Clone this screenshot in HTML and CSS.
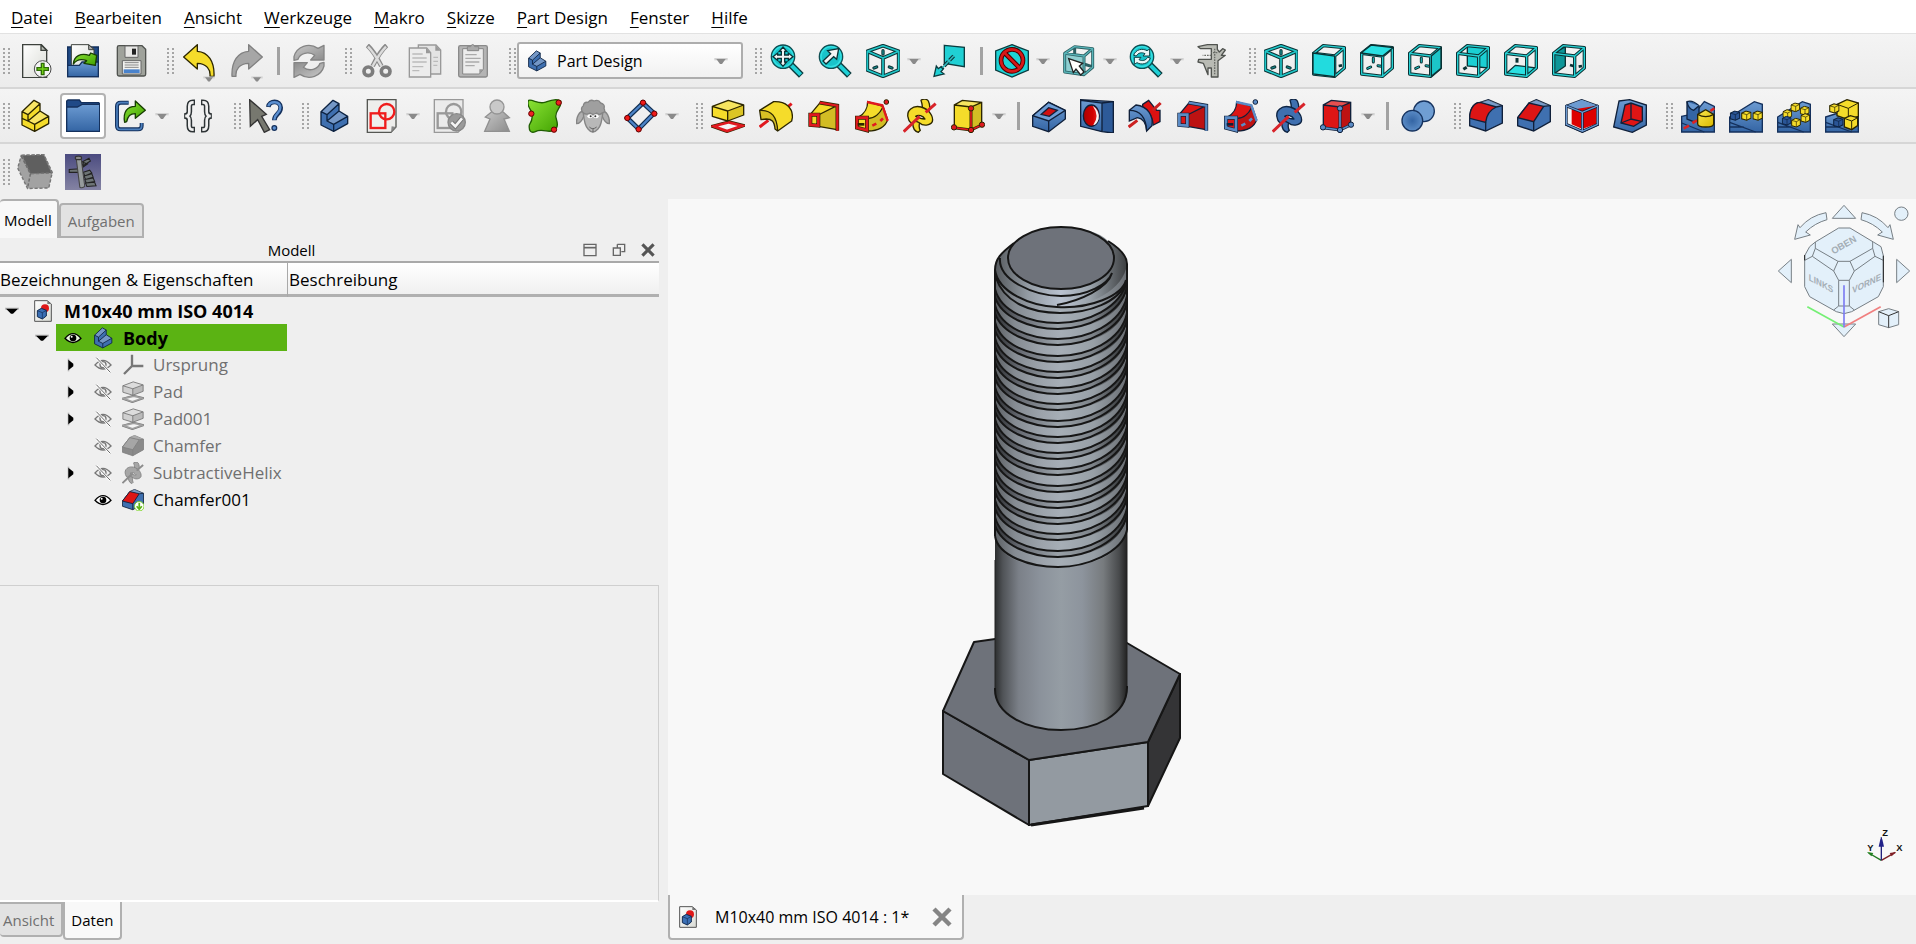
FILE: index.html
```html
<!DOCTYPE html>
<html lang="de">
<head>
<meta charset="utf-8">
<title>M10x40 mm ISO 4014 - FreeCAD</title>
<link rel="stylesheet" href="styles.css">
</head>
<body>
<svg class="sprite" aria-hidden="true">
  <defs>
    <linearGradient id="g-blue" x1="0" y1="0" x2="0" y2="1"><stop offset="0" stop-color="#6c9bd2"/><stop offset="1" stop-color="#3465a4"/></linearGradient>
    <linearGradient id="g-yellow" x1="0" y1="0" x2="1" y2="1"><stop offset="0" stop-color="#fce94f"/><stop offset="1" stop-color="#d9b800"/></linearGradient>
    <linearGradient id="g-green" x1="0" y1="0" x2="1" y2="1"><stop offset="0" stop-color="#8ae234"/><stop offset="1" stop-color="#3fa000"/></linearGradient>
    <linearGradient id="g-gray" x1="0" y1="0" x2="1" y2="1"><stop offset="0" stop-color="#c8c8c8"/><stop offset="1" stop-color="#8c8c8c"/></linearGradient>
    <linearGradient id="g-paper" x1="0" y1="0" x2="1" y2="1"><stop offset="0" stop-color="#ffffff"/><stop offset="1" stop-color="#d9dbd5"/></linearGradient>
    <linearGradient id="g-night" x1="0" y1="0" x2="0" y2="1"><stop offset="0" stop-color="#4b4b80"/><stop offset="1" stop-color="#8483a3"/></linearGradient>
    <radialGradient id="g-ball"><stop offset="0" stop-color="#3465a4"/><stop offset="1" stop-color="#5b8cc6"/></radialGradient>
    <linearGradient id="g-bore"><stop offset="0" stop-color="#a00"/><stop offset=".6" stop-color="#d40000"/><stop offset="1" stop-color="#ef3030"/></linearGradient>
    <linearGradient id="g-shank"><stop offset="0" stop-color="#2c2e2f"/><stop offset=".06" stop-color="#505357"/><stop offset=".18" stop-color="#7b8088"/><stop offset=".34" stop-color="#8b929b"/><stop offset=".5" stop-color="#959da4"/><stop offset=".66" stop-color="#8d949d"/><stop offset=".82" stop-color="#777b7e"/><stop offset=".94" stop-color="#484a4c"/><stop offset="1" stop-color="#222"/></linearGradient>
    <linearGradient id="g-thread"><stop offset="0" stop-color="#5c6064"/><stop offset=".15" stop-color="#858b92"/><stop offset=".35" stop-color="#9ca3ab"/><stop offset=".5" stop-color="#a6aeb6"/><stop offset=".75" stop-color="#979fa6"/><stop offset="1" stop-color="#6a6e73"/></linearGradient>
    <linearGradient id="g-root"><stop offset="0" stop-color="#2e3033"/><stop offset=".2" stop-color="#6a6e76"/><stop offset=".48" stop-color="#99a1a8"/><stop offset=".75" stop-color="#7d8389"/><stop offset="1" stop-color="#2e3032"/></linearGradient>
    <linearGradient id="g-bevel"><stop offset="0" stop-color="#55595d"/><stop offset=".25" stop-color="#939ba3"/><stop offset=".5" stop-color="#b9c2d0"/><stop offset=".72" stop-color="#9aa3ab"/><stop offset="1" stop-color="#3c3e40"/></linearGradient>
  </defs>

  <symbol id="i-new" viewBox="0 0 102 102"><path d="M14 2H70L86 18V101H14Z" fill="url(#g-paper)" stroke="#3c413c" stroke-width="4"/><path d="M69 2V19H86Z" fill="#babdb6" stroke="#3c413c" stroke-width="4"/><circle cx="74" cy="75" r="25" fill="#f4f4f4" stroke="#4a4a4a" stroke-width="3"/><path d="M70 58h8v13h13v8H78v13h-8V79H57v-8h13Z" fill="#73d216" stroke="#2d6b06" stroke-width="4"/></symbol>
  <symbol id="i-open" viewBox="0 0 102 102"><path d="M5 9H97V98H5Z" fill="#204a87" stroke="#14305c" stroke-width="4"/><path d="M16 2H68L84 16V70H16Z" fill="url(#g-paper)" stroke="#3c413c" stroke-width="3"/><path d="M68 2V17H84Z" fill="#aaa" stroke="#3c413c" stroke-width="3"/><path d="M5 64H40L48 54H97V98H5Z" fill="url(#g-blue)" stroke="#14305c" stroke-width="4"/><path d="M22 60C24 36 44 26 70 34L74 27L92 34L88 64L54 58L62 50C46 44 32 46 22 60Z" fill="url(#g-green)" stroke="#173d02" stroke-width="4" stroke-linejoin="round"/></symbol>
  <symbol id="i-save" viewBox="0 0 102 102"><path d="M10 10Q10 5 15 5H84L95 16V91Q95 96 90 96H15Q10 96 10 91Z" fill="#9fa29b" stroke="#50534f" stroke-width="4"/><path d="M33 6H72V40H33Z" fill="#e8e8e6" stroke="#666" stroke-width="3"/><path d="M54 14H66V32H54Z" fill="#222"/><path d="M25 50H81V90H25Z" fill="#f2f2f0" stroke="#666" stroke-width="3"/><path d="M32 56H74M32 63H74M32 70H74" stroke="#888" stroke-width="3"/><path d="M29 76H77V87H29Z" fill="#4a83cc"/></symbol>
  <symbol id="i-undo" viewBox="0 0 102 102"><path d="M5 39L46 2V22C78 24 98 52 96 97H84C86 76 74 59 46 58V75Z" fill="var(--main)" stroke="var(--ink)" stroke-width="4" stroke-linejoin="round"/></symbol>
  <symbol id="i-refresh" viewBox="0 0 102 102"><path id="p-refresh" d="M6 38C14 8 50-6 78 13L96 4V48H56L68 34C50 20 24 28 18 46L6 49Z" fill="url(#g-gray)" stroke="#858585" stroke-width="4" stroke-linejoin="round"/><use href="#p-refresh" transform="rotate(180 51 52)"/></symbol>
  <symbol id="i-cut" viewBox="0 0 102 102"><path d="M22 4C34 14 52 42 64 66M80 4C68 14 50 42 38 66" stroke="#8a8a8a" stroke-width="14" fill="none"/><path d="M24 8C36 20 52 44 64 66M78 8C66 20 50 44 38 66" stroke="#dcdcdc" stroke-width="7" fill="none"/><circle cx="25" cy="82" r="13" fill="none" stroke="#7d7d7d" stroke-width="11"/><circle cx="77" cy="82" r="13" fill="none" stroke="#7d7d7d" stroke-width="11"/></symbol>
  <symbol id="i-copy" viewBox="0 0 102 102"><path d="M31 3H84L98 18V90H31Z" fill="#e4e4e4" stroke="#999" stroke-width="4"/><path d="M82 3V20H98Z" fill="#999"/><path d="M4 12H56L68 26V99H4Z" fill="#ececec" stroke="#999" stroke-width="4"/><path d="M54 12V28H68Z" fill="#999"/><path d="M13 30H44M13 42H56M13 54H56M13 68H46M13 80H34M76 40H90M76 52H90M76 64H88" stroke="#bbb" stroke-width="4"/></symbol>
  <symbol id="i-paste" viewBox="0 0 102 102"><rect x="8" y="5" width="86" height="94" rx="5" fill="#b4b4b4" stroke="#8a8a8a" stroke-width="4"/><path d="M20 14H82V76L70 90H20Z" fill="#ececec" stroke="#888" stroke-width="3"/><path d="M34 8H44Q50-6 56 8H68V20H34Z" fill="#aaa" stroke="#888" stroke-width="3"/><path d="M28 32H62M28 43H74M28 54H70M28 65H56" stroke="#aaa" stroke-width="4"/><path d="M70 90V76H82Z" fill="#999"/></symbol>
  <symbol id="i-lens" viewBox="0 0 102 102"><path d="M62 62L94 94" stroke="#0b3c3f" stroke-width="20"/><path d="M62 62L92 92" stroke="#1fd0d6" stroke-width="12"/><circle cx="39" cy="38" r="35" fill="#19c4ca" stroke="#0f4e52" stroke-width="4"/><circle cx="39" cy="38" r="30" fill="none" stroke="#34e0e2" stroke-width="4"/></symbol>
  <symbol id="i-fit" viewBox="0 0 102 102"><use href="#i-lens"/><path d="M39 9L50 22H44V33H55V27L69 38L55 49V43H44V54H50L39 67L28 54H34V43H23V49L9 38L23 27V33H34V22H28Z" fill="#f4f4f4" stroke="#0b3337" stroke-width="4"/></symbol>
  <symbol id="i-fitsel" viewBox="0 0 102 102"><use href="#i-lens"/><path d="M62 14L56 46L47 38L24 60L15 51L38 29L29 20Z" fill="#f4f4f4" stroke="#0b3337" stroke-width="4"/></symbol>
  <symbol id="i-zoomcycle" viewBox="0 0 102 102"><use href="#i-lens"/><path d="M14 34C20 16 40 12 54 20L62 15V36H42L48 29C38 24 28 26 22 36ZM64 42C58 60 38 64 24 56L16 61V40H36L30 47C40 52 50 50 56 40Z" fill="#e9f7f7" stroke="#0b4347" stroke-width="3"/></symbol>
  <symbol id="i-iso" viewBox="0 0 102 102"><g fill="none" stroke-linejoin="round"><path d="M4 22L51 5L98 22V78L51 97L4 78ZM4 22L51 42L98 22M51 42V97" stroke="#0d3537" stroke-width="11"/><path d="M4 22L51 5L98 22V78L51 97L4 78ZM4 22L51 42L98 22M51 42V97" stroke="#20c7c9" stroke-width="5"/></g><path d="M51 20V30M24 72L32 69M70 69L78 72" stroke="#0d3537" stroke-width="10" stroke-linecap="round"/><path d="M51 20V30M24 72L32 69M70 69L78 72" stroke="#178b8e" stroke-width="4" stroke-linecap="round"/></symbol>
  <symbol id="i-frame" viewBox="0 0 102 102"><path d="M5 28L68 36L97 11L34 5ZM5 28V90L68 97V36M68 97L97 72V11" fill="none" stroke="#0b3234" stroke-width="10" stroke-linejoin="round"/><path d="M5 28L68 36L97 11L34 5ZM5 28V90L68 97V36M68 97L97 72V11" fill="none" stroke="#26d2d4" stroke-width="4" stroke-linejoin="round"/></symbol>
  <symbol id="i-marks" viewBox="0 0 102 102"><path d="M40 42V54M23 73L32 69M54 65L64 67" stroke="#0b3234" stroke-width="9" stroke-linecap="round"/><path d="M40 42V54M23 73L32 69M54 65L64 67" stroke="#20c7c9" stroke-width="3" stroke-linecap="round"/></symbol>
  <symbol id="i-front" viewBox="0 0 102 102"><path d="M80 66L90 64" stroke="#0b3234" stroke-width="8"/><use href="#i-frame"/><path d="M3 27L68 36V98L3 90Z" fill="#22dbde" stroke="#0b3234" stroke-width="4"/></symbol>
  <symbol id="i-top" viewBox="0 0 102 102"><use href="#i-marks"/><use href="#i-frame"/><path d="M3 27L68 36L99 11L34 3Z" fill="#2be0e2" stroke="#0b3234" stroke-width="4"/></symbol>
  <symbol id="i-right" viewBox="0 0 102 102"><use href="#i-marks"/><use href="#i-frame"/><path d="M70 36L99 11V73L70 97Z" fill="#1cc5c8" stroke="#0b3234" stroke-width="4"/></symbol>
  <symbol id="i-rear" viewBox="0 0 102 102"><path d="M34 5L97 11V72L34 66Z" fill="#1bd0d3" stroke="#0b3234" stroke-width="4"/><path d="M22 76L32 70" stroke="#0b3234" stroke-width="9"/><use href="#i-frame"/></symbol>
  <symbol id="i-bottom" viewBox="0 0 102 102"><path d="M34 64L97 72L68 97L5 90Z" fill="#2be0e2" stroke="#0b3234" stroke-width="4"/><path d="M39 42V56" stroke="#0b3234" stroke-width="9"/><use href="#i-frame"/></symbol>
  <symbol id="i-left" viewBox="0 0 102 102"><path d="M5 28L40 8V66L5 90Z" fill="#0e9698" stroke="#0b3234" stroke-width="4"/><path d="M54 63L64 66M80 68L90 66" stroke="#0b3234" stroke-width="8"/><use href="#i-frame"/></symbol>
  <symbol id="i-align" viewBox="0 0 102 102"><path d="M34 4L94 10V68L34 58Z" fill="#20d0d4" stroke="#0b3c3f" stroke-width="4"/><path d="M62 36L22 78" stroke="#0b3337" stroke-width="11" stroke-dasharray="18 5"/><path d="M62 36L22 78" stroke="#31bcc0" stroke-width="5"/><path d="M3 97L10 66L16 74L24 68L30 76L24 83L33 90Z" fill="#20d0d4" stroke="#0b3c3f" stroke-width="4"/></symbol>
  <symbol id="i-drawstyle" viewBox="0 0 102 102"><path d="M51 2L100 21V78L51 99L2 78V21Z" fill="#1dd3d6" stroke="#0b3c3f" stroke-width="4"/><circle cx="51" cy="49" r="33" fill="none" stroke="#4a0000" stroke-width="14"/><path d="M29 27L73 71" stroke="#4a0000" stroke-width="14"/><circle cx="51" cy="49" r="33" fill="none" stroke="#d81818" stroke-width="8"/><path d="M28 26L74 72" stroke="#d81818" stroke-width="8"/></symbol>
  <symbol id="i-boxsel" viewBox="0 0 102 102"><path d="M8 30L62 38V94L8 86Z" fill="#8fcfd1"/><g fill="none" stroke-linejoin="round"><path d="M8 28L66 36L92 14L38 8ZM8 28V84L66 92V36M66 92L92 70V14M38 8V32M66 60L90 68" stroke="#2b5f62" stroke-width="9"/><path d="M8 28L66 36L92 14L38 8ZM8 28V84L66 92V36M66 92L92 70V14" stroke="#58b4b8" stroke-width="4"/></g><path d="M20 44L62 58L52 66L66 84L56 93L42 75L34 86Z" fill="#fff" stroke="#222" stroke-width="4"/></symbol>
  <symbol id="i-caliper" viewBox="0 0 102 102"><path d="M6 8L34 2H64V16L70 24L80 14L88 18L76 34L88 34L66 50V99H46V72H36V92L22 58L6 54L8 46H46V14H14Z" fill="#b9bbb4" stroke="#50534f" stroke-width="4" stroke-linejoin="round"/><path d="M56 14V94M64 26H46M46 34H20" stroke="#6c6f69" stroke-width="4" stroke-dasharray="5 3"/></symbol>

  <symbol id="i-step" viewBox="0 0 102 102"><path d="M12 38L48 4L66 14L66 36L92 52V74L50 97L12 78Z" fill="var(--main)"/><path d="M12 38L48 4L66 14L30 47ZM30 66L66 36L92 52L50 76Z" fill="#fff" fill-opacity=".28"/><path d="M12 38L48 4L66 14V36L92 52V74L50 97L12 78ZM12 38L30 47L66 14M30 47V66L50 76L92 52M50 76V97M30 66L66 36" fill="none" stroke="var(--ink)" stroke-width="4" stroke-linejoin="round"/></symbol>
  <symbol id="i-yellowpart" viewBox="0 0 102 102"><use href="#i-step"/><path d="M12 58L30 66" stroke="var(--ink)" stroke-width="4"/></symbol>
  <symbol id="i-folder" viewBox="0 0 102 102"><path d="M2 22V6L6 3H40L46 11H98L101 14V96H2Z" fill="#204a87" stroke="#14305c" stroke-width="4"/><path d="M2 24H34L48 16H101V97H2Z" fill="url(#g-blue)" stroke="#14305c" stroke-width="4"/></symbol>
  <symbol id="i-link" viewBox="0 0 102 102"><path d="M44 11H20Q9 11 9 22V80Q9 91 20 91H72Q83 91 83 80V72" fill="none" stroke="#16335f" stroke-width="12"/><path d="M44 11H20Q9 11 9 22V80Q9 91 20 91H72Q83 91 83 80V72" fill="none" stroke="#4c80be" stroke-width="5"/><path d="M32 70C26 38 40 22 64 22V6L94 34L64 58V44C48 44 42 50 38 68Z" fill="url(#g-green)" stroke="#173d02" stroke-width="4" stroke-linejoin="round"/></symbol>
  <symbol id="i-bracehalf" viewBox="0 0 102 102"><path d="M42 10H36Q25 10 25 22V38Q25 50 10 51Q25 52 25 64V80Q25 92 36 92H42" fill="none" stroke="#2e3436" stroke-width="17"/><path d="M38 10H36Q25 10 25 22V38Q25 50 13 51Q25 52 25 64V80Q25 92 36 92H38" fill="none" stroke="#f0f0f0" stroke-width="8"/></symbol>
  <symbol id="i-braces" viewBox="0 0 102 102"><use href="#i-bracehalf"/><g transform="matrix(-1 0 0 1 102 0)"><use href="#i-bracehalf"/></g></symbol>
  <symbol id="i-help" viewBox="0 0 102 102"><path d="M2 2L52 46L38 52L62 92L46 100L26 62L4 82Z" fill="#77786f" stroke="#333" stroke-width="4"/><path d="M58 24C60 4 94 2 95 26C95 46 76 44 76 64" fill="none" stroke="#14305c" stroke-width="14"/><path d="M58 22C62 6 93 4 94 26C94 44 76 44 76 62" fill="none" stroke="#5b8fd0" stroke-width="7"/><circle cx="76" cy="87" r="7" fill="#5b8fd0" stroke="#14305c" stroke-width="4"/></symbol>
  <symbol id="i-sketch" viewBox="0 0 102 102"><path d="M7 2H93V84L78 100H7Z" fill="#eeeeec" stroke="#555753" stroke-width="4"/><path d="M78 100L80 82L93 84Z" fill="#888"/><g fill="none" stroke="var(--main)" stroke-width="7"><rect x="17" y="43" width="44" height="44"/><circle cx="65" cy="38" r="23"/></g></symbol>
  <symbol id="i-validate" viewBox="0 0 102 102"><path d="M7 2H93V84L78 100H7Z" fill="#ebebeb" stroke="#999" stroke-width="4"/><g fill="none" stroke="#999" stroke-width="7"><rect x="17" y="43" width="44" height="44"/><circle cx="65" cy="38" r="23"/></g><circle cx="74" cy="70" r="26" fill="#9a9a9a" stroke="#888" stroke-width="4"/><path d="M58 70L70 82L90 58" fill="none" stroke="#777" stroke-width="14"/><path d="M58 70L70 82L90 58" fill="none" stroke="#f4f4f4" stroke-width="8"/></symbol>
  <symbol id="i-pawn" viewBox="0 0 102 102"><path d="M38 36L16 54L30 60L14 97H88L72 60L88 56L64 34Z" fill="url(#g-gray)" stroke="#909090" stroke-width="4"/><circle cx="51" cy="24" r="21" fill="#c9c9c9" stroke="#959595" stroke-width="4"/></symbol>
  <symbol id="i-surface" viewBox="0 0 102 102"><path d="M2 4C14 0 30 16 50 10S84-2 98 6C104 24 78 36 84 56C88 70 92 84 80 92C66 106 44 86 22 98C8 104 2 94 4 78C14 62 16 44 6 30C0 20-2 10 2 4Z" fill="url(#g-green)" stroke="#1f5c02" stroke-width="4"/><g fill="#e22" stroke="#600" stroke-width="3"><circle cx="92" cy="11" r="8"/><circle cx="10" cy="44" r="8"/><circle cx="78" cy="92" r="8"/></g></symbol>
  <symbol id="i-sheep" viewBox="0 0 102 102"><path d="M24 36C10 36 0 54 2 74C14 74 20 60 24 50ZM78 36C92 36 102 54 100 74C88 74 82 60 78 50Z" fill="#b0b0b0" stroke="#858585" stroke-width="4"/><path d="M22 44C24 64 26 80 36 90Q50 108 66 90C76 80 78 64 80 44Z" fill="#b8b8b8" stroke="#858585" stroke-width="4"/><path d="M20 40Q12 28 22 20Q24 8 36 10Q44 0 54 6Q68 0 74 12Q88 16 84 28Q90 40 78 42Q70 50 62 42Q50 50 42 42Q30 50 20 40Z" fill="#9f9f9f" stroke="#858585" stroke-width="4"/><ellipse cx="42" cy="52" rx="8" ry="6" fill="#fff"/><ellipse cx="60" cy="52" rx="8" ry="6" fill="#fff"/><circle cx="44" cy="52" r="3" fill="#333"/><circle cx="58" cy="52" r="3" fill="#333"/><path d="M40 84Q50 94 62 84M51 89V100" fill="none" stroke="#666" stroke-width="3"/></symbol>
  <symbol id="i-datum" viewBox="0 0 102 102"><path d="M57 12L90 43L44 90L10 57Z" fill="none" stroke="#122f52" stroke-width="14"/><path d="M57 12L90 43L44 90L10 57Z" fill="none" stroke="#4d84c8" stroke-width="7"/><g fill="#f01a1a" stroke="#5e0000" stroke-width="3"><circle cx="57" cy="11" r="8"/><circle cx="91" cy="44" r="8"/><circle cx="44" cy="91" r="8"/><circle cx="10" cy="57" r="8"/></g></symbol>

  <symbol id="i-pad" viewBox="0 0 102 102"><path d="M8 82L54 70L94 80L48 96Z" fill="none" stroke="var(--ink)" stroke-width="12"/><path d="M8 82L54 70L94 80L48 96Z" fill="#f4f4f4" stroke="var(--edge)" stroke-width="8"/><path d="M4 22L52 4L98 18V48L50 66L4 52Z" fill="var(--main)"/><path d="M4 22L52 4L98 18L50 36Z" fill="#fff" fill-opacity=".25"/><path d="M50 36L98 18V48L50 66Z" fill="#000" fill-opacity=".1"/><path d="M4 22L52 4L98 18V48L50 66L4 52ZM4 22L50 36L98 18M50 36V66" fill="none" stroke="var(--ink)" stroke-width="4" stroke-linejoin="round"/></symbol>
  <symbol id="i-revolve" viewBox="0 0 102 102"><path d="M76 32L98 14M2 84L28 64" stroke="var(--edge)" stroke-width="9"/><path d="M2 34L44 8C80 6 102 26 100 56L98 66L56 96L48 90C46 66 38 60 22 60L6 62Z" fill="var(--main)" stroke="var(--ink)" stroke-width="4" stroke-linejoin="round"/><path d="M4 36C36 34 52 56 54 92L48 88C46 66 38 58 22 58L6 60Z" fill="#000" fill-opacity=".12"/><path d="M2 34C38 32 54 54 56 96" fill="none" stroke="var(--ink)" stroke-width="4"/></symbol>
  <symbol id="i-groove" viewBox="0 0 102 102"><path d="M44 16L62 4L86 34L96 34V68L76 78C74 54 66 38 44 28Z" fill="#d11" stroke="var(--ink)" stroke-width="4"/><path d="M74 34L98 12M2 84L28 64" stroke="#c22" stroke-width="9"/><path d="M4 34L24 18C60 22 76 50 72 80L56 96C54 68 44 58 28 56L4 66Z" fill="url(#g-blue)" stroke="var(--ink)" stroke-width="4"/><path d="M4 34C34 34 54 54 56 96" fill="none" stroke="var(--ink)" stroke-width="4"/></symbol>
  <symbol id="i-loft" viewBox="0 0 102 102"><path d="M10 46L40 10L90 18V92L34 82L10 78Z" fill="var(--main)"/><path d="M34 48L90 20V92L34 82Z" fill="#000" fill-opacity=".14"/><path d="M10 46L40 10M34 48L90 20M34 82L90 92" fill="none" stroke="var(--ink)" stroke-width="4"/><path d="M38 11L91 20V95" fill="none" stroke="var(--ink)" stroke-width="11"/><path d="M38 11L91 20V95" fill="none" stroke="var(--edge)" stroke-width="7"/><path d="M10 47H34V80L10 78Z" fill="var(--main)" stroke="var(--ink)" stroke-width="12"/><path d="M10 47H34V80L10 78Z" fill="none" stroke="var(--edge)" stroke-width="8"/></symbol>
  <symbol id="i-sweep" viewBox="0 0 102 102"><path d="M10 54C30 44 38 24 38 8L84 22L98 62C92 84 68 96 40 96Z" fill="var(--main)" stroke="var(--ink)" stroke-width="4"/><path d="M38 60C60 58 76 40 84 24L98 62C92 84 68 96 40 96Z" fill="#000" fill-opacity=".14"/><path d="M40 58C60 58 76 40 84 24" fill="none" stroke="var(--ink)" stroke-width="4"/><path d="M36 9L82 19L98 66" fill="none" stroke="var(--edge)" stroke-width="7"/><path d="M6 56H36V94L6 86Z" fill="var(--main)" stroke="var(--ink)" stroke-width="12"/><path d="M6 56H36V94L6 86Z" fill="none" stroke="var(--edge)" stroke-width="8"/><path d="M8 76H28" stroke="var(--ink)" stroke-width="8"/><path d="M52 80L64 74M76 66L84 58" stroke="var(--edge)" stroke-width="8"/><circle cx="94" cy="9" r="7" fill="var(--edge)" stroke="var(--ink)" stroke-width="3"/></symbol>
  <symbol id="i-helix" viewBox="0 0 102 102"><g fill="var(--main)" stroke="var(--ink)" stroke-width="4" stroke-linejoin="round"><path d="M54 4C62-2 72 0 76 6C84 24 80 40 64 50L50 42C60 36 60 22 54 4Z"/><path d="M30 64C28 80 32 96 46 100L52 94C48 88 48 78 50 70Z"/><path d="M16 58C8 34 30 18 54 24C78 30 92 52 88 68C82 80 60 82 50 72C42 66 34 66 28 72Q18 70 16 58ZM38 52C46 46 60 50 66 60C56 60 46 58 38 52Z" fill-rule="evenodd"/></g><path d="M2 98L50 52M68 40L98 14" stroke="var(--axis)" stroke-width="9"/></symbol>
  <symbol id="i-prim" viewBox="0 0 102 102"><path d="M10 18L34 4L92 10V74L58 92L10 84Z" fill="var(--main)"/><path d="M10 18L34 4L92 10L60 24Z" fill="#fff" fill-opacity=".25"/><path d="M60 24L92 10V74L60 92Z" fill="#000" fill-opacity=".14"/><path d="M10 84V18L34 4L92 10V74M10 18L60 24L92 10" fill="none" stroke="var(--ink)" stroke-width="4"/><path d="M60 28V92M8 86L60 93L92 78" fill="none" stroke="var(--ink)" stroke-width="9"/><path d="M60 28V92M8 86L60 93L92 78" fill="none" stroke="var(--edge)" stroke-width="5"/><g fill="var(--edge)" stroke="var(--ink)" stroke-width="3"><circle cx="60" cy="28" r="8"/><circle cx="9" cy="85" r="8"/><circle cx="60" cy="93" r="8"/><circle cx="93" cy="77" r="8"/></g></symbol>
  <symbol id="i-pocket" viewBox="0 0 102 102"><path d="M2 50L50 10L100 34V60L50 98L2 82Z" fill="url(#g-blue)" stroke="var(--ink)" stroke-width="4"/><path d="M2 50L50 10L100 34L50 66Z" fill="#6e9ed6" stroke="var(--ink)" stroke-width="4"/><path d="M50 66V98" stroke="var(--ink)" stroke-width="4"/><path d="M28 46L50 26L76 34L52 52Z" fill="#d01010" stroke="var(--ink)" stroke-width="4"/></symbol>
  <symbol id="i-hole" viewBox="0 0 102 102"><path d="M2 4L100 8V102L66 98L2 82Z" fill="#2d5a98"/><path d="M2 4L66 12V98L2 82Z" fill="url(#g-blue)"/><path d="M2 82V2L100 8V102L66 98ZM2 4L66 12V98M66 12L100 8" fill="none" stroke="var(--ink)" stroke-width="4"/><ellipse cx="34" cy="50" rx="24" ry="32" fill="url(#g-bore)" stroke="var(--ink)" stroke-width="4"/><path d="M38 20Q60 34 56 60Q50 78 40 78Q60 50 38 20Z" fill="#f4f4f4"/></symbol>
  <symbol id="i-boolean" viewBox="0 0 102 102"><circle cx="69" cy="37" r="31" fill="#6f9ed3" stroke="#16335f" stroke-width="4"/><circle cx="34" cy="65" r="31" fill="url(#g-ball)" stroke="#16335f" stroke-width="4"/></symbol>
  <symbol id="i-fillet" viewBox="0 0 102 102"><path d="M2 58C2 24 18 10 34 10L58 2L100 20V72L50 96L2 80Z" fill="var(--body)" stroke="var(--ink)" stroke-width="4"/><path d="M34 10L58 2L100 20L82 26Z" fill="#fff" fill-opacity=".3"/><path d="M2 58C2 26 18 10 34 10L82 24C60 34 52 50 50 70Z" fill="var(--main)" stroke="var(--ink)" stroke-width="4"/><path d="M50 70V96M82 24L100 20" stroke="var(--ink)" stroke-width="4"/></symbol>
  <symbol id="i-chamfer" viewBox="0 0 102 102"><path d="M2 56L36 12L58 2L100 20V68L50 96L2 80Z" fill="var(--body)" stroke="var(--ink)" stroke-width="4"/><path d="M36 12L58 2L100 20L80 24Z" fill="#fff" fill-opacity=".3"/><path d="M2 56L36 12L80 22L50 68Z" fill="var(--main)" stroke="var(--ink)" stroke-width="4"/><path d="M50 68V96M80 22L100 20" stroke="var(--ink)" stroke-width="4"/></symbol>
  <symbol id="i-draft" viewBox="0 0 102 102"><path d="M2 20L50 2L100 20V78L52 100L2 78Z" fill="#f4f4f4" stroke="var(--ink)" stroke-width="4"/><path d="M2 20L50 2L100 20L88 26L52 40Z" fill="#6c9bd2"/><path d="M20 32L94 20V74L52 90L20 76Z" fill="#d00"/><path d="M2 20L52 40L100 20M52 40V98M4 22V76L52 97L98 76V22" fill="none" stroke="var(--ink)" stroke-width="8"/><path d="M2 20L52 40L100 20M52 40V98M4 22V76L52 97L98 76V22" fill="none" stroke="#6c9bd2" stroke-width="4"/></symbol>
  <symbol id="i-thickness" viewBox="0 0 102 102"><path d="M18 6L50 2L100 18V78L58 100L2 84Z" fill="url(#g-blue)" stroke="var(--ink)" stroke-width="4"/><path d="M36 18L54 12L88 24V66L62 82L24 72Z" fill="#e01515" stroke="var(--ink)" stroke-width="4"/><path d="M54 12V60L24 72M54 60L88 68" fill="none" stroke="var(--ink)" stroke-width="4"/></symbol>
  <symbol id="i-slope" viewBox="0 0 102 102"><path d="M2 54L76 8L100 16V99H2Z" fill="url(#g-blue)" stroke="#14305c" stroke-width="4"/><path d="M2 70L80 99M2 84H44" stroke="#14305c" stroke-width="4"/></symbol>
  <symbol id="i-box" viewBox="0 0 30 30"><path d="M2 8L14 2L28 6V22L16 28L2 24Z" fill="var(--main)" stroke="var(--ink)" stroke-width="3"/><path d="M2 8L16 12L28 6M16 12V28" fill="none" stroke="var(--ink)" stroke-width="2"/></symbol>
  <symbol id="i-mirror" viewBox="0 0 102 102"><path d="M2 52L40 44L70 8L100 22V99H2Z" fill="url(#g-blue)" stroke="#14305c" stroke-width="4"/><path d="M2 72L70 99" stroke="#14305c" stroke-width="4"/><path d="M18 8Q34 2 54 20V62L38 68L18 60Z" fill="#3465a4" stroke="#0d2342" stroke-width="4"/><path d="M18 8Q22 30 38 34L54 20" fill="#6c9bd2" stroke="#0d2342" stroke-width="4"/><path d="M8 88L24 80M34 72L48 64M88 36L100 28" stroke="#d22" stroke-width="8"/><path d="M50 46L74 32L98 46V74Q98 84 74 84Q50 84 50 74Z" fill="url(#g-yellow)" stroke="#2c2600" stroke-width="4"/><path d="M50 46Q74 60 98 46" fill="none" stroke="#2c2600" stroke-width="4"/></symbol>
  <symbol id="i-linear" viewBox="0 0 102 102"><use href="#i-slope"/><g class="navy"><use href="#i-box" x="2" y="34" width="32" height="32"/></g><use href="#i-box" x="36" y="34" width="32" height="32"/><use href="#i-box" x="70" y="34" width="32" height="32"/></symbol>
  <symbol id="i-polar" viewBox="0 0 102 102"><use href="#i-slope"/><use href="#i-box" x="40" y="10" width="30" height="30"/><use href="#i-box" x="68" y="20" width="30" height="30"/><use href="#i-box" x="16" y="30" width="30" height="30"/><use href="#i-box" x="70" y="42" width="30" height="30"/><g class="navy"><use href="#i-box" x="14" y="50" width="30" height="30"/></g><use href="#i-box" x="42" y="56" width="30" height="30"/></symbol>
  <symbol id="i-multi" viewBox="0 0 102 102"><path d="M2 54L40 42H100V99H2Z" fill="url(#g-blue)" stroke="#14305c" stroke-width="4"/><path d="M2 70L80 99M2 84H44" stroke="#14305c" stroke-width="4"/><path d="M36 16L66 2L100 12V52L70 62L36 50Z" fill="var(--main)" stroke="var(--ink)" stroke-width="4"/><path d="M36 16L70 28L100 12M70 28V60" fill="none" stroke="var(--ink)" stroke-width="3"/><use href="#i-box" x="12" y="12" width="32" height="32"/><g class="navy"><use href="#i-box" x="24" y="54" width="32" height="32"/></g><path d="M58 58L76 50L98 56V80L80 92L58 84Z" fill="var(--main)" stroke="var(--ink)" stroke-width="4"/><path d="M58 58L80 66L98 56M80 66V92" fill="none" stroke="var(--ink)" stroke-width="3"/></symbol>
  <symbol id="i-lasercut" viewBox="0 0 102 102"><path d="M12 4L76 2L100 52L90 96L30 98L2 40Z" fill="#a2a2a2" stroke="#777" stroke-width="4" stroke-dasharray="9 5"/><path d="M14 4L76 2L98 54L38 56Z" fill="#5f5f5f" stroke="#777" stroke-width="4" stroke-dasharray="9 5"/><path d="M12 6L38 56L30 96" fill="none" stroke="#6d6d6d" stroke-width="4" stroke-dasharray="9 5"/></symbol>
  <symbol id="i-stairs" viewBox="0 0 102 102"><path d="M0 0H102V102H0Z" fill="url(#g-night)"/><g fill="#6d7475" stroke="#222" stroke-width="3"><path d="M46 24L68 12L72 20L50 34ZM44 42L12 44V52L46 52ZM52 24L64 28L50 38Z"/><path d="M52 52L70 46L76 54L56 62ZM54 62L76 56L80 66L58 72ZM56 72L80 68L84 78L60 82ZM58 82L84 80L88 90L62 92Z"/></g><path d="M32 14H46L56 92Q50 98 42 94Z" fill="#969b9c" stroke="#444" stroke-width="3"/><ellipse cx="38" cy="11" rx="9" ry="5" fill="#888" stroke="#333" stroke-width="3"/></symbol>

  <symbol id="i-doc" viewBox="0 0 54 66"><path d="M2 2H40L52 12V64H2Z" fill="url(#g-paper)" stroke="#555" stroke-width="3"/><path d="M40 2V12H52Z" fill="#777"/><circle cx="33" cy="25" r="12" fill="#e01818"/><path d="M10 32L22 25L37 31V48L25 57L10 50Z" fill="#3a6fb5" stroke="#122b50" stroke-width="3"/><path d="M10 32L25 38L37 31M25 38V57" fill="none" stroke="#122b50" stroke-width="2"/></symbol>
  <symbol id="i-eye" viewBox="0 0 54 36"><path d="M3 19Q27-9 51 19Q27 44 3 19Z" fill="#fff" fill-opacity=".85" stroke="#000" stroke-width="4"/><circle cx="27" cy="18" r="10" fill="#000"/><circle cx="23" cy="14" r="3" fill="#fff"/></symbol>
  <symbol id="i-eyeoff" viewBox="0 0 54 48"><path d="M3 24Q27-4 51 24Q27 48 3 24Z" fill="none" stroke="#777" stroke-width="4"/><circle cx="27" cy="23" r="9" fill="none" stroke="#777" stroke-width="4"/><path d="M7 2L49 46" stroke="#fff" stroke-width="7"/><path d="M7 2L49 46" stroke="#666" stroke-width="3"/></symbol>
  <symbol id="i-origin" viewBox="0 0 66 66"><path d="M30 2V36L64 36M30 36L6 60" fill="none" stroke="#777" stroke-width="7" stroke-linejoin="round"/></symbol>
  <symbol id="i-tip" viewBox="0 0 102 102"><use href="#i-chamfer"/><circle cx="80" cy="80" r="22" fill="#fff" stroke="#73d216" stroke-width="4"/><path d="M80 64V92M68 80L80 94L92 80" fill="none" stroke="#5cb514" stroke-width="8"/></symbol>
  <symbol id="i-caret" viewBox="0 0 42 24"><path d="M1 3H41V10H1Z" fill="#d2d2d2"/><path d="M7 6H35L24 21H18Z" fill="#8a8a8a"/></symbol>
  <symbol id="i-down" viewBox="0 0 42 24"><path d="M0 2H42V8H0Z" fill="#bbb"/><path d="M3 5H39L24 20H18Z" fill="#000"/></symbol>
  <symbol id="i-play" viewBox="0 0 24 42"><path d="M2 2V40H7V2Z" fill="#bbb"/><path d="M4 5V37L19 25V17Z" fill="#000"/></symbol>
  <symbol id="i-x" viewBox="0 0 40 40"><path d="M4 4L36 36M36 4L4 36" stroke="currentColor" stroke-width="9"/></symbol>
</svg>

<nav class="menubar" aria-label="Hauptmenü">
  <button><u>D</u>atei</button><button><u>B</u>earbeiten</button><button><u>A</u>nsicht</button><button><u>W</u>erkzeuge</button><button><u>M</u>akro</button><button><u>S</u>kizze</button><button><u>P</u>art Design</button><button><u>F</u>enster</button><button><u>H</u>ilfe</button>
</nav>

<div class="toolbar-row">
  <div class="toolbar"><i class="grip"></i>
    <button class="tool" aria-label="Neu"><svg><use href="#i-new"/></svg></button>
    <button class="tool" aria-label="Öffnen"><svg><use href="#i-open"/></svg></button>
    <button class="tool" aria-label="Speichern"><svg><use href="#i-save"/></svg></button>
  </div>
  <div class="toolbar"><i class="grip"></i>
    <button class="tool corner additive" aria-label="Rückgängig"><svg><use href="#i-undo"/></svg><svg class="caret"><use href="#i-caret"/></svg></button>
    <button class="tool corner muted" aria-label="Wiederherstellen"><svg class="flip"><use href="#i-undo"/></svg><svg class="caret"><use href="#i-caret"/></svg></button>
    <i class="sep"></i>
    <button class="tool" aria-label="Aktualisieren"><svg><use href="#i-refresh"/></svg></button>
  </div>
  <div class="toolbar"><i class="grip"></i>
    <button class="tool" aria-label="Ausschneiden"><svg><use href="#i-cut"/></svg></button>
    <button class="tool" aria-label="Kopieren"><svg><use href="#i-copy"/></svg></button>
    <button class="tool" aria-label="Einfügen"><svg><use href="#i-paste"/></svg></button>
  </div>
  <div class="toolbar"><i class="grip"></i>
    <div class="workbench body"><svg class="wb-icon"><use href="#i-step"/></svg><select aria-label="Arbeitsbereich"><option>Part Design</option></select><svg class="caret"><use href="#i-caret"/></svg></div>
  </div>
  <div class="toolbar"><i class="grip"></i>
    <button class="tool" aria-label="Alles einpassen"><svg><use href="#i-fit"/></svg></button>
    <button class="tool" aria-label="Auswahl einpassen"><svg><use href="#i-fitsel"/></svg></button>
    <button class="tool menu" aria-label="Isometrisch"><svg><use href="#i-iso"/></svg><svg class="caret"><use href="#i-caret"/></svg></button>
    <button class="tool" aria-label="An Auswahl ausrichten"><svg><use href="#i-align"/></svg></button>
    <i class="sep"></i>
    <button class="tool menu" aria-label="Zeichenstil"><svg><use href="#i-drawstyle"/></svg><svg class="caret"><use href="#i-caret"/></svg></button>
    <button class="tool menu" aria-label="Auswahl"><svg><use href="#i-boxsel"/></svg><svg class="caret"><use href="#i-caret"/></svg></button>
    <button class="tool menu" aria-label="Verknüpfung"><svg><use href="#i-zoomcycle"/></svg><svg class="caret"><use href="#i-caret"/></svg></button>
    <button class="tool" aria-label="Messen"><svg><use href="#i-caliper"/></svg></button>
  </div>
  <div class="toolbar"><i class="grip"></i>
    <button class="tool" aria-label="Isometrische Ansicht"><svg><use href="#i-iso"/></svg></button>
    <button class="tool" aria-label="Vorne"><svg><use href="#i-front"/></svg></button>
    <button class="tool" aria-label="Oben"><svg><use href="#i-top"/></svg></button>
    <button class="tool" aria-label="Rechts"><svg><use href="#i-right"/></svg></button>
    <button class="tool" aria-label="Hinten"><svg><use href="#i-rear"/></svg></button>
    <button class="tool" aria-label="Unten"><svg><use href="#i-bottom"/></svg></button>
    <button class="tool" aria-label="Links"><svg><use href="#i-left"/></svg></button>
  </div>
</div>

<div class="toolbar-row">
  <div class="toolbar"><i class="grip"></i>
    <button class="tool additive" aria-label="Part erstellen"><svg><use href="#i-yellowpart"/></svg></button>
    <button class="tool checked" aria-label="Gruppe erstellen"><svg><use href="#i-folder"/></svg></button>
    <button class="tool menu" aria-label="Link erstellen"><svg><use href="#i-link"/></svg><svg class="caret"><use href="#i-caret"/></svg></button>
    <button class="tool" aria-label="VarSet"><svg><use href="#i-braces"/></svg></button>
  </div>
  <div class="toolbar"><i class="grip"></i>
    <button class="tool" aria-label="Direkthilfe"><svg><use href="#i-help"/></svg></button>
  </div>
  <div class="toolbar"><i class="grip"></i>
    <button class="tool body" aria-label="Körper erstellen"><svg><use href="#i-step"/></svg></button>
    <button class="tool menu redline" aria-label="Skizze erstellen"><svg><use href="#i-sketch"/></svg><svg class="caret"><use href="#i-caret"/></svg></button>
    <button class="tool" aria-label="Skizze überprüfen"><svg><use href="#i-validate"/></svg></button>
    <button class="tool" aria-label="Geometrie prüfen"><svg><use href="#i-pawn"/></svg></button>
    <button class="tool" aria-label="Formbinder"><svg><use href="#i-surface"/></svg></button>
    <button class="tool" aria-label="Klonen"><svg><use href="#i-sheep"/></svg></button>
    <button class="tool menu" aria-label="Bezugsebene"><svg><use href="#i-datum"/></svg><svg class="caret"><use href="#i-caret"/></svg></button>
  </div>
  <div class="toolbar"><i class="grip"></i>
    <button class="tool additive" aria-label="Aufpolsterung"><svg><use href="#i-pad"/></svg></button>
    <button class="tool additive" aria-label="Drehteil"><svg><use href="#i-revolve"/></svg></button>
    <button class="tool additive" aria-label="Ausformung"><svg><use href="#i-loft"/></svg></button>
    <button class="tool additive" aria-label="Austragung"><svg><use href="#i-sweep"/></svg></button>
    <button class="tool additive" aria-label="Wendel"><svg><use href="#i-helix"/></svg></button>
    <button class="tool menu additive" aria-label="Grundkörper hinzufügen"><svg><use href="#i-prim"/></svg><svg class="caret"><use href="#i-caret"/></svg></button>
    <i class="sep"></i>
    <button class="tool subtractive" aria-label="Tasche"><svg><use href="#i-pocket"/></svg></button>
    <button class="tool subtractive" aria-label="Bohrung"><svg><use href="#i-hole"/></svg></button>
    <button class="tool subtractive" aria-label="Nut"><svg><use href="#i-groove"/></svg></button>
    <button class="tool subtractive" aria-label="Abziehbare Ausformung"><svg><use href="#i-loft"/></svg></button>
    <button class="tool subtractive" aria-label="Abziehbare Austragung"><svg><use href="#i-sweep"/></svg></button>
    <button class="tool body" aria-label="Abziehbare Wendel"><svg><use href="#i-helix"/></svg></button>
    <button class="tool menu subtractive" aria-label="Grundkörper abziehen"><svg><use href="#i-prim"/></svg><svg class="caret"><use href="#i-caret"/></svg></button>
    <i class="sep"></i>
    <button class="tool" aria-label="Boolesche Verknüpfung"><svg><use href="#i-boolean"/></svg></button>
  </div>
  <div class="toolbar"><i class="grip"></i>
    <button class="tool subtractive" aria-label="Verrundung"><svg><use href="#i-fillet"/></svg></button>
    <button class="tool subtractive" aria-label="Fase"><svg><use href="#i-chamfer"/></svg></button>
    <button class="tool subtractive" aria-label="Formschräge"><svg><use href="#i-draft"/></svg></button>
    <button class="tool subtractive" aria-label="Wandstärke"><svg><use href="#i-thickness"/></svg></button>
  </div>
  <div class="toolbar"><i class="grip"></i>
    <button class="tool additive" aria-label="Spiegeln"><svg><use href="#i-mirror"/></svg></button>
    <button class="tool additive" aria-label="Lineares Muster"><svg><use href="#i-linear"/></svg></button>
    <button class="tool additive" aria-label="Polares Muster"><svg><use href="#i-polar"/></svg></button>
    <button class="tool additive" aria-label="Mehrfachtransformation"><svg><use href="#i-multi"/></svg></button>
  </div>
</div>

<div class="toolbar-row plain">
  <div class="toolbar"><i class="grip"></i>
    <button class="tool big" aria-label="Laserschnitt"><svg><use href="#i-lasercut"/></svg></button>
    <button class="tool big" aria-label="Treppe"><svg><use href="#i-stairs"/></svg></button>
  </div>
</div>

<main class="workspace">
  <aside class="dock">
    <div class="tabs top" role="tablist"><button class="tab active" role="tab">Modell</button><button class="tab" role="tab">Aufgaben</button></div>
    <header class="dock-title"><h2>Modell</h2>
      <div class="dock-actions">
        <button aria-label="Einklappen"><svg viewBox="0 0 42 42"><path d="M3 4H39V38H3Z" fill="none" stroke="#666" stroke-width="4"/><path d="M3 14H39" stroke="#666" stroke-width="5"/></svg></button>
        <button aria-label="Abdocken"><svg viewBox="0 0 42 42"><path d="M16 4H38V26H28M4 15H25V37H4ZM16 14V4" fill="none" stroke="#666" stroke-width="4"/></svg></button>
        <button aria-label="Schließen" class="close"><svg><use href="#i-x"/></svg></button>
      </div>
    </header>
    <div class="tree-head"><span>Bezeichnungen &amp; Eigenschaften</span><span>Beschreibung</span></div>
    <ul class="tree">
      <li class="l0"><svg class="down"><use href="#i-down"/></svg><div class="item strong"><span class="cell"><svg class="doc"><use href="#i-doc"/></svg></span>M10x40 mm ISO 4014</div></li>
      <li class="l1"><svg class="down"><use href="#i-down"/></svg><div class="item strong selected body"><span class="cell"><svg class="eye"><use href="#i-eye"/></svg></span><svg class="ico"><use href="#i-step"/></svg>Body</div></li>
      <li class="l2"><svg class="play"><use href="#i-play"/></svg><div class="item hidden"><span class="cell"><svg class="eye"><use href="#i-eyeoff"/></svg></span><svg class="ico"><use href="#i-origin"/></svg>Ursprung</div></li>
      <li class="l2"><svg class="play"><use href="#i-play"/></svg><div class="item hidden"><span class="cell"><svg class="eye"><use href="#i-eyeoff"/></svg></span><svg class="ico pale"><use href="#i-pad"/></svg>Pad</div></li>
      <li class="l2"><svg class="play"><use href="#i-play"/></svg><div class="item hidden"><span class="cell"><svg class="eye"><use href="#i-eyeoff"/></svg></span><svg class="ico pale"><use href="#i-pad"/></svg>Pad001</div></li>
      <li class="l2"><i class="leaf"></i><div class="item hidden"><span class="cell"><svg class="eye"><use href="#i-eyeoff"/></svg></span><svg class="ico muted"><use href="#i-chamfer"/></svg>Chamfer</div></li>
      <li class="l2"><svg class="play"><use href="#i-play"/></svg><div class="item hidden"><span class="cell"><svg class="eye"><use href="#i-eyeoff"/></svg></span><svg class="ico muted"><use href="#i-helix"/></svg>SubtractiveHelix</div></li>
      <li class="l2"><i class="leaf"></i><div class="item"><span class="cell"><svg class="eye"><use href="#i-eye"/></svg></span><svg class="ico subtractive"><use href="#i-tip"/></svg>Chamfer001</div></li>
    </ul>
    <section class="properties" aria-label="Daten"></section>
    <div class="tabs bottom" role="tablist"><button class="tab" role="tab">Ansicht</button><button class="tab active" role="tab">Daten</button></div>
  </aside>

  <section class="document">
    <div class="view">
      <svg class="scene" viewBox="668 199 1248 696" role="img" aria-label="Schraube M10x40">
        <g stroke="#161616" stroke-width="2" stroke-linejoin="round">
          <path d="M943 711L1029 760V825L943 774Z" fill="#6e727a"/>
          <path d="M1029 760L1148 742V806L1029 825Z" fill="#939aa1"/>
          <path d="M1148 742L1180 674V738L1148 806Z" fill="#343436"/>
          <path d="M974 642L1060 630L1127 643L1180 674L1148 742L1029 760L943 711Z" fill="#6e727a"/>
          <path d="M1031 825L1144 808" stroke-width="3"/>
        </g>
        <path d="M995 540V693C997 717 1028 730 1061 730S1125 717 1127 690V530Z" fill="url(#g-shank)"/>
        <path d="M995 688C994 715 1028 730 1061 730S1128 716 1127 686" fill="none" stroke="#161616" stroke-width="2"/>
        <path d="M995 560V688M1127 530V686" stroke="#222" stroke-width="1"/>
        <path d="M995 272C995 259 1001 253 1014 243C1030 224 1092 222 1108 241C1121 249 1127 256 1127 264V530C1122 552 1096 567 1058 567S998 556 995 536Z" fill="url(#g-thread)"/>
        <path d="M995 272C995 258 1001 253 1014 243L1108 241C1121 249 1127 256 1127 264C1124 290 1090 307 1058 307C1024 307 998 291 995 272Z" fill="url(#g-bevel)"/>
        <defs>
          <g id="turn" stroke="#161616" stroke-width="2" fill="none">
            <path d="M995 291C1002 312 1030 323 1058 323S1121 309 1126 284V291C1120 317 1090 329 1058 329S1002 316 995 298Z" fill="url(#g-root)" stroke="none"/>
            <path d="M995 289C1001 312 1030 323 1058 323S1121 309 1127 280M995 297C1001 317 1030 329 1058 329S1121 314 1127 287"/>
          </g>
        </defs>
        <use href="#turn"/><use href="#turn" y="16"/><use href="#turn" y="33"/><use href="#turn" y="49"/><use href="#turn" y="65"/><use href="#turn" y="81"/><use href="#turn" y="98"/><use href="#turn" y="114"/><use href="#turn" y="130"/><use href="#turn" y="146"/><use href="#turn" y="163"/><use href="#turn" y="179"/><use href="#turn" y="195"/><use href="#turn" y="211"/><use href="#turn" y="228"/>
        <g fill="none" stroke="#161616" stroke-width="2">
          <path d="M995 536C998 556 1030 567 1058 567S1122 553 1127 530"/>
          <path d="M995 536V270C995 259 1001 253 1014 243M1108 241C1121 249 1127 256 1127 264V530"/>
          <path d="M1000 258C998 280 1034 296 1061 296C1088 296 1108 284 1112 273C1108 288 1080 301 1057 305"/>
          <path d="M995 270C998 292 1030 306 1057 307C1090 309 1122 296 1126 280"/>
          <path d="M996 278C1004 302 1030 313 1060 313S1118 302 1126 283"/>
          <ellipse cx="1061" cy="258" rx="53" ry="31" fill="#6e727a"/>
        </g>
      </svg>

      <svg class="navcube" viewBox="0 12 468 438" role="img" aria-label="Navigationswürfel">
        <g fill="#e3f0fa" stroke="#777f85" stroke-width="3" stroke-linejoin="round">
          <path d="M217 70L252 31L287 70Z"/><path d="M55 228L94 193V263Z"/><path d="M449 228L410 193V263Z"/><path d="M217 387H287L252 425Z"/>
          <circle cx="424" cy="56" r="20"/>
          <path d="M198 53L201 74Q165 84 137 111L151 120L104 133L114 89L120 98Q150 62 198 53Z"/>
          <path d="M306 53L303 74Q339 84 367 111L353 120L400 133L390 89L384 98Q354 62 306 53Z"/>
          <path d="M236 99H270L340 141L363 155L370 182V275L355 305L275 350L252 356L229 350L149 305L134 275V182L149 155L166 141Z"/>
          <path d="M166 141V160L234 199H270L338 160V141M166 160L157 184L134 196M157 184L221 228L234 199M270 199L283 228L345 184L338 160M345 184L370 196M221 228L236 256H268L283 228M236 256V333M268 256V333M236 333H268L283 345M236 333L221 345" fill="none"/>
          <path d="M356 350L386 341L416 350V389L386 398L356 389Z"/><path d="M356 350L386 362L416 350M386 362V398" fill="none" stroke="#333"/>
          <path d="M370 182V262M134 180V196" stroke="#222"/>
        </g>
        <g class="facelabel"><text transform="matrix(.88 -.5 .5 .88 256 158)">OBEN</text><text transform="matrix(.87 .46 0 1 183 275)">LINKS</text><text transform="matrix(.87 -.42 0 1 320 275)">VORNE</text></g>
        <g stroke-width="5"><path d="M252 396L142 335" stroke="#75ef75"/><path d="M252 396L362 335" stroke="#f08080"/><path d="M252 397V271" stroke="#7d7df2"/></g>
      </svg>

      <svg class="axes" viewBox="0 0 228 240" role="img" aria-label="Achsenkreuz">
        <g stroke-width="4"><path d="M124 151L86 129" stroke="#207a20"/><path d="M124 151L166 127" stroke="#7a2025"/><path d="M124 151V82" stroke="#22227d"/></g>
        <path d="M116 110L121 88H127L132 110Z" fill="#22228a"/><path d="M81 126L100 129L94 139Z" fill="#208020"/><path d="M168 126L149 129L155 139Z" fill="#802025"/>
        <g class="axislabel"><text x="127" y="78">Z</text><text x="82" y="122">Y</text><text x="169" y="122">X</text></g>
      </svg>
    </div>
    <div class="mdi">
      <div class="mdi-tab"><svg class="doc"><use href="#i-doc"/></svg><span>M10x40 mm ISO 4014 : 1*</span><button aria-label="Schließen"><svg><use href="#i-x"/></svg></button></div>
    </div>
  </section>
</main>
</body>
</html>
```

FILE: styles.css
```css
* { box-sizing: border-box; }

body {
  margin: 0;
  min-height: 100vh;
  display: flex;
  flex-direction: column;
  background: #efefef;
  color: #000;
  font: 16px/22px "Open Sans", "Noto Sans", sans-serif;
}

button, select {
  font: inherit;
  color: inherit;
  background: none;
  border: 0;
  padding: 0;
  margin: 0;
}

svg { display: block; overflow: visible; }
.sprite { position: absolute; width: 0; height: 0; overflow: hidden; }

/* icon palettes */
.additive { --main: #f5dc2a; --edge: #e0191f; --ink: #2c2600; --axis: #d8232a; }
.subtractive { --main: #dd1515; --edge: #5b8cc6; --ink: #10203a; --axis: #d8232a; --body: #3f70b0; }
.body { --main: #3f70b0; --ink: #0d2342; --axis: #d8232a; }
.navy { --main: #2a5596; --ink: #0d2342; }
.redline { --main: #ef1c1c; }
.muted { --main: #a6a6a6; --edge: #8c8c8c; --ink: #808080; --axis: #8c8c8c; --body: #8a8a8a; }
.pale { --main: #d0d0d0; --edge: #a0a0a0; --ink: #757575; }

/* menu bar */
.menubar { display: flex; height: 34px; background: #fff; border-bottom: 1px solid #e2e2e2; font-size: 17px; }
.menubar button { padding: 2px 11px 0; }
.menubar u { text-underline-offset: 3px; text-decoration-thickness: 1px; }

/* toolbars */
.toolbar-row {
  display: flex;
  gap: 9px;
  height: 55px;
  background: linear-gradient(#f4f4f4, #ececec);
  border-bottom: 2px solid #d6d6d6;
}
.toolbar-row.plain { background: none; border: 0; }
.toolbar { display: flex; align-items: center; }
.grip {
  width: 8px;
  height: 26px;
  margin: 0 0 0 3px;
  background: radial-gradient(circle at 1px 1px, #a5a5a5 1px, transparent 1px) 0 0 / 5px 4px;
}
.sep { width: 3px; height: 28px; margin: 0 5px 0 6px; background: #a2a2a2; }
.tool { flex: none; display: flex; align-items: center; justify-content: center; width: 48px; height: 46px; }
.tool svg { width: 34px; height: 34px; }
.tool.big svg { width: 36px; height: 36px; }
.tool .caret, .workbench .caret { flex: none; width: 14px; height: 8px; }
.tool.menu { width: 67px; justify-content: flex-start; gap: 7px; padding-left: 7px; }
.tool.corner { position: relative; }
.tool.corner .caret { position: absolute; right: 8px; bottom: 1px; width: 12px; }
.tool.checked { width: 46px; margin: 0 1px; background: #fff; border: 2px solid #b2b2b2; border-radius: 4px; }
.flip { transform: scaleX(-1); }
.workbench {
  display: flex;
  align-items: center;
  width: 226px;
  height: 37px;
  padding: 0 13px 0 7px;
  background: linear-gradient(#fff, #f1f1f1);
  border: 2px solid #adadad;
  border-radius: 3px;
}
.wb-icon { width: 22px; height: 22px; }
.workbench select { flex: 1; appearance: none; padding-left: 9px; outline: 0; }

/* workspace */
.workspace { flex: 1; display: grid; grid-template-columns: minmax(0, 668fr) minmax(0, 1248fr); }
.dock { display: flex; flex-direction: column; padding-right: 9px; }
.tabs { display: flex; font-size: 15px; }
.tab { color: #707070; background: #e2e2e2; border: 2px solid #b0b0b0; height: 35px; padding: 0 7px; }
.tab.active { color: #000; background: #f8f8f8; }
.tabs.top { align-items: flex-end; height: 39px; }
.top .tab { border-radius: 4px 4px 0 0; }
.top .active { height: 39px; border-bottom: 0; border-left: 0; padding: 0 5px 0 4px; }
.tabs.bottom { align-items: flex-start; height: 42px; }
.bottom .tab { border-radius: 0 0 4px 4px; padding: 0 7px 0 3px; border-left: 0; }
.bottom .active { height: 38px; border-top: 0; border-left: 2px solid #b0b0b0; padding: 0 6px; }

.dock-title { display: flex; justify-content: flex-end; align-items: center; height: 23px; }
.dock-title h2 { flex: 1; margin: 0; font: inherit; font-size: 15px; text-align: center; }
.dock-actions { display: flex; gap: 15px; padding-right: 4px; }
.dock-actions svg { width: 14px; height: 14px; }
.close { color: #555; }

.tree-head {
  display: grid;
  grid-template-columns: 287px 1fr;
  height: 36px;
  font-size: 17px;
  line-height: 34px;
  background: linear-gradient(#fff, #f0f0f0);
  border-top: 2px solid #a9a9a9;
  border-bottom: 3px solid #b0b0b0;
  white-space: nowrap;
}
.tree-head span + span { border-left: 1px solid #a9a9a9; padding-left: 1px; }

.tree { flex: 289 1 0; margin: 0; padding: 0; list-style: none; width: 287px; font-size: 17px; }
.tree li { display: flex; align-items: center; height: 27px; }
.l1 { padding-left: 30px; }
.l2 { padding-left: 60px; }
.tree .down { width: 14px; height: 8px; margin: 0 7px 0 5px; }
.tree .play { width: 8px; height: 14px; margin: 0 11px 0 7px; }
.leaf { width: 26px; }
.item { flex: 1; display: flex; align-items: center; height: 27px; white-space: nowrap; }
.cell { width: 34px; display: flex; justify-content: center; }
.doc { width: 18px; height: 22px; }
.eye { width: 18px; height: 16px; }
.ico { width: 22px; height: 22px; margin: 0 9px 0 2px; }
.l0 .item { gap: 4px; }
.strong { font-weight: 700; font-size: 18px; }
.selected { background: #5bb313; }
.hidden { color: #707070; }

.properties { flex: 316 1 0; border: 1px solid #cfcfcf; border-left: 0; border-bottom: 2px solid #fff; }

/* 3D view */
.document { display: flex; flex-direction: column; }
.view { position: relative; flex: 1; min-height: 0; background: #f8f8f8; }
.scene { position: absolute; inset: 0; width: 100%; height: 100%; }
.navcube { position: absolute; top: 0; right: 0; width: 156px; height: 146px; }
.axes { position: absolute; right: 0; bottom: 5px; width: 76px; height: 80px; }
.facelabel text { font: 700 28px "Liberation Sans", sans-serif; fill: #a3adb5; text-anchor: middle; }
.axislabel text { font: 700 28px "Liberation Sans", sans-serif; fill: #111; }

.mdi { height: 49px; display: flex; align-items: flex-start; }
.mdi-tab {
  display: flex;
  align-items: center;
  height: 45px;
  padding: 0 10px 0 9px;
  background: #f8f8f8;
  border: 2px solid #b0b0b0;
  border-top: 0;
  border-radius: 0 0 4px 4px;
}
.mdi-tab span { padding: 0 23px 0 18px; }
.mdi-tab button { color: #858585; }
.mdi-tab button svg { width: 20px; height: 20px; }
```
